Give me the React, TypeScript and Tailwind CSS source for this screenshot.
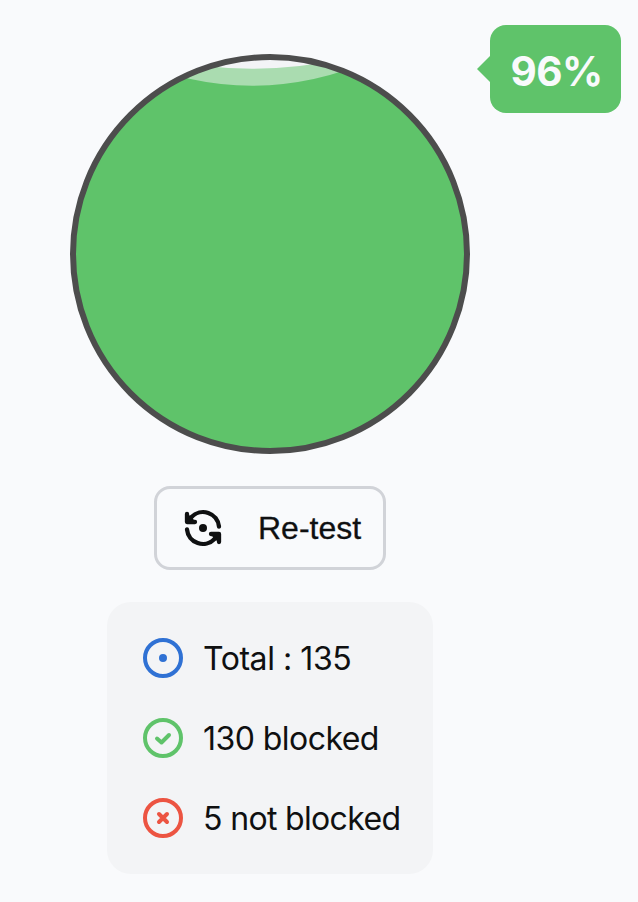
import type { ReactNode } from 'react';

const TOTAL = 135;
const BLOCKED = 130;

export default function App() {
  const percent = Math.round((BLOCKED / TOTAL) * 100);

  return (
    <div className="min-h-[902px] w-[638px] overflow-hidden bg-[#f9fafc] font-['Inter',sans-serif] text-[#0f1011]">
      <div className="flex items-start pl-[70px] pt-[25px]">
        <Gauge />
        <ScoreBadge percent={percent} />
      </div>

      <div className="flex w-[540px] flex-col items-center pt-8">
        <button className="flex h-[84px] w-[232px] items-center rounded-2xl border-3 border-[#d1d3d8] pl-[22px] font-['Liberation_Sans',sans-serif] text-[32px]">
          <RetestIcon />
          <span className="ml-[31px] whitespace-nowrap [-webkit-text-stroke:0.3px_#0f1011]">Re-test</span>
        </button>

        <div className="mt-8 flex w-[326px] flex-col gap-8 rounded-3xl bg-[#f3f4f6] p-8">
          <StatRow className="text-[#2f71d4]" mark={<circle cx="24" cy="24" r="2" fill="currentColor" />}>
            <span className="tracking-[-0.45px]">Total : {TOTAL}</span>
          </StatRow>
          <StatRow className="text-[#5fc36a]" mark={<path d="M18 24.5l4.5 4 7.5-7.5" />}>
            <span className="tracking-[-0.55px]">{BLOCKED} blocked</span>
          </StatRow>
          <StatRow className="text-[#ec5442]" mark={<path d="M20 20l8 8M28 20l-8 8" />}>
            <span className="tracking-[-0.66px]">{TOTAL - BLOCKED} not blocked</span>
          </StatRow>
        </div>
      </div>
    </div>
  );
}

function Gauge() {
  return (
    <svg viewBox="-6 -6 400 400" className="mt-[29px] h-[400px] w-[400px] shrink-0">
      <clipPath id="gauge">
        <circle cx="194" cy="194" r="196" />
      </clipPath>
      <g clipPath="url(#gauge)">
        <path d="M-6 -6H394V394H-6Z" fill="#f3f4f6" />
        <path d="M76 -3.3Q176 20.7 276 -3.3H394V394H-6V-3.3Z" fill="#aadcb0" />
        <path d="M0 -29.1Q176 80.5 352 -29.1H394V394H-6V-29.1Z" fill="#5fc36a" />
      </g>
      <circle cx="194" cy="194" r="197" fill="none" stroke="#4d4d4d" strokeWidth="6" />
    </svg>
  );
}

function ScoreBadge({ percent }: { percent: number }) {
  return (
    <div className="flex items-center">
      <svg viewBox="0 0 14 28" className="-mr-px ml-[7px] h-7 w-3.5">
        <path d="M0 14L14 0V28Z" fill="#5fc36a" />
      </svg>
      <div className="flex h-[87.5px] w-[131px] items-center justify-center rounded-2xl bg-[#5fc36a] pl-0.5 pt-[7px] text-[40.5px] font-[750] tracking-[-0.5px] text-[#f9fafc]">
        {percent}%
      </div>
    </div>
  );
}

function StatRow({ className, mark, children }: { className: string; mark: ReactNode; children: ReactNode }) {
  return (
    <div className="flex h-12 items-center gap-4 whitespace-nowrap text-[32px]">
      <svg
        viewBox="0 0 48 48"
        className={`h-12 w-12 shrink-0 ${className}`}
        fill="none"
        stroke="currentColor"
        strokeWidth="4"
        strokeLinecap="round"
        strokeLinejoin="round"
      >
        <circle cx="24" cy="24" r="18" />
        {mark}
      </svg>
      <div className="pt-0.5 font-[430]">{children}</div>
    </div>
  );
}

function RetestIcon() {
  return (
    <svg
      viewBox="0 0 48 48"
      className="h-12 w-12 shrink-0"
      fill="none"
      stroke="currentColor"
      strokeWidth="4.3"
      strokeLinecap="round"
      strokeLinejoin="round"
    >
      <path d="M40 22.5A16 16 0 0 0 12.5 13L8.5 17" />
      <path d="M8 25.5A16 16 0 0 0 35.5 35L39.5 31" />
      <path d="M8 10V18H16L13 13Z" fill="currentColor" stroke="none" />
      <path d="M40 38V30H32L35 35Z" fill="currentColor" stroke="none" />
      <path d="M8 10V18H16" />
      <path d="M40 38V30H32" />
      <circle cx="24" cy="24" r="4" fill="currentColor" stroke="none" />
    </svg>
  );
}
